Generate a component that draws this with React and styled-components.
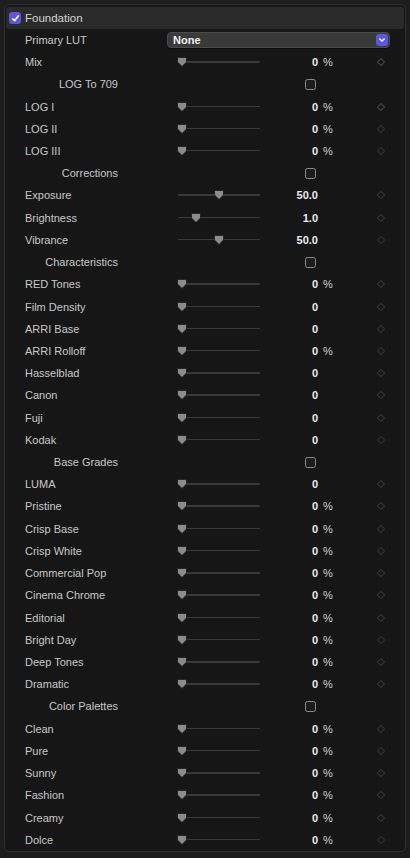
import React from "react";
import styled, { createGlobalStyle } from "styled-components";

const GlobalStyle = createGlobalStyle`
  html, body { margin: 0; padding: 0; background: #1d1d1d; }
  body { font-family: "Liberation Sans", Arial, sans-serif; -webkit-font-smoothing: antialiased; }
  * { box-sizing: border-box; }
`;

const Panel = styled.div`
  margin: 4px 4px 0 4px;
  width: 402px;
  border: 1px solid #2f2f2f;
  border-radius: 5px;
  background: #161616;
  padding: 2px 1px 0 1px;
`;

const Header = styled.div`
  height: 22px;
  background: #2a2a2a;
  border-radius: 3px;
  display: flex;
  align-items: center;
  padding-left: 3px;
  gap: 4px;
`;

const HeaderTitle = styled.span`
  color: #d4d4d4;
  font-size: 11.5px;
`;

const BlueCheck = styled.span`
  width: 12px;
  height: 12px;
  border-radius: 3px;
  background: #5a57d8;
  display: flex;
  align-items: center;
  justify-content: center;
`;

const Row = styled.div`
  height: ${(p) => p.$h || "22.23px"};
  display: grid;
  grid-template-columns: ${(p) => p.$cols};
  align-items: center;
  padding-left: 19px;
`;

const Label = styled.span`
  color: #c8c8c8;
  font-size: 11px;
  white-space: nowrap;
  text-align: ${(p) => (p.$right ? "right" : "left")};
`;

const Dropdown = styled.div`
  height: 16px;
  background: #3a3a3a;
  border: 1px solid #4b4b4b;
  border-radius: 4px;
  display: flex;
  align-items: center;
  justify-content: space-between;
  padding: 0 0 0 5px;
  box-shadow: 0 1px 1px rgba(0,0,0,0.5);
`;

const DropText = styled.span`
  color: #f0f0f0;
  font-size: 11px;
  font-weight: 700;
`;

const DropButton = styled.span`
  width: 12px;
  height: 12px;
  border-radius: 3px;
  background: #5a57e0;
  margin-right: 1px;
  display: flex;
  align-items: center;
  justify-content: center;
`;

const SliderBox = styled.div`
  position: relative;
  height: 10px;
  width: 84px;
`;

const Track = styled.div`
  position: absolute;
  left: 1px;
  right: 1px;
  top: 4px;
  height: 1.5px;
  background: #3a3a3a;
  border-radius: 1px;
`;

const Thumb = styled.svg`
  position: absolute;
  top: 0;
`;

const Value = styled.span`
  color: #ececec;
  font-size: 11px;
  font-weight: 700;
  text-align: right;
`;

const Unit = styled.span`
  color: #d0d0d0;
  font-size: 11px;
  padding-left: 5px;
`;

const Diamond = styled.span`
  justify-self: center;
  width: 6px;
  height: 6px;
  border: 1px solid ${(p) => (p.$lit ? "#474747" : "#333333")};
  transform: rotate(45deg);
`;

const Box = styled.span`
  width: 11px;
  height: 11px;
  border: 1.3px solid #8a8a8a;
  border-radius: 2.5px;
  background: #1c1c1c;
`;

const SLIDER_COLS = "152px 84px 57px 1fr 22px 12px";
const SUB_COLS = "93px 187px 12px";

const rows = [
  { t: "s", l: "Mix", v: "0", u: "%", lit: true },
  { t: "h", l: "LOG To 709" },
  { t: "s", l: "LOG I", v: "0", u: "%", lit: true },
  { t: "s", l: "LOG II", v: "0", u: "%" },
  { t: "s", l: "LOG III", v: "0", u: "%" },
  { t: "h", l: "Corrections" },
  { t: "s", l: "Exposure", v: "50.0", p: 0.49 },
  { t: "s", l: "Brightness", v: "1.0", p: 0.19 },
  { t: "s", l: "Vibrance", v: "50.0", p: 0.49 },
  { t: "h", l: "Characteristics" },
  { t: "s", l: "RED Tones", v: "0", u: "%" },
  { t: "s", l: "Film Density", v: "0" },
  { t: "s", l: "ARRI Base", v: "0" },
  { t: "s", l: "ARRI Rolloff", v: "0", u: "%" },
  { t: "s", l: "Hasselblad", v: "0" },
  { t: "s", l: "Canon", v: "0" },
  { t: "s", l: "Fuji", v: "0" },
  { t: "s", l: "Kodak", v: "0" },
  { t: "h", l: "Base Grades" },
  { t: "s", l: "LUMA", v: "0" },
  { t: "s", l: "Pristine", v: "0", u: "%" },
  { t: "s", l: "Crisp Base", v: "0", u: "%" },
  { t: "s", l: "Crisp White", v: "0", u: "%" },
  { t: "s", l: "Commercial Pop", v: "0", u: "%" },
  { t: "s", l: "Cinema Chrome", v: "0", u: "%" },
  { t: "s", l: "Editorial", v: "0", u: "%" },
  { t: "s", l: "Bright Day", v: "0", u: "%" },
  { t: "s", l: "Deep Tones", v: "0", u: "%" },
  { t: "s", l: "Dramatic", v: "0", u: "%" },
  { t: "h", l: "Color Palettes" },
  { t: "s", l: "Clean", v: "0", u: "%" },
  { t: "s", l: "Pure", v: "0", u: "%" },
  { t: "s", l: "Sunny", v: "0", u: "%" },
  { t: "s", l: "Fashion", v: "0", u: "%" },
  { t: "s", l: "Creamy", v: "0", u: "%" },
  { t: "s", l: "Dolce", v: "0", u: "%" },
];

function Slider({ p = 0 }) {
  return (
    <SliderBox>
      <Track />
      <Thumb width="10" height="10" viewBox="0 0 10 10" style={{ left: `${p * 75}px` }}>
        <polygon points="0.5,0.5 9.5,0.5 9.5,5 5,9.5 0.5,5" fill="#8b8b8b" stroke="#1a1a1a" strokeWidth="0.8" />
      </Thumb>
    </SliderBox>
  );
}

export default function App() {
  return (
    <>
      <GlobalStyle />
      <Panel>
        <Header>
          <BlueCheck>
            <svg width="9" height="9" viewBox="0 0 9 9">
              <path d="M1.6 4.8 L3.6 6.8 L7.4 1.8" fill="none" stroke="#fff" strokeWidth="1.5" strokeLinecap="round" strokeLinejoin="round" />
            </svg>
          </BlueCheck>
          <HeaderTitle>Foundation</HeaderTitle>
        </Header>
        <Row $h="22px" $cols="142px 223px">
          <Label>Primary LUT</Label>
          <Dropdown>
            <DropText>None</DropText>
            <DropButton>
              <svg width="8" height="8" viewBox="0 0 8 8">
                <path d="M1.8 2.9 L4 5.1 L6.2 2.9" fill="none" stroke="#fff" strokeWidth="1.4" strokeLinecap="round" strokeLinejoin="round" />
              </svg>
            </DropButton>
          </Dropdown>
        </Row>
        {rows.map((r, i) =>
          r.t === "h" ? (
            <Row key={i} $cols={SUB_COLS}>
              <Label $right>{r.l}</Label>
              <span />
              <Box />
            </Row>
          ) : (
            <Row key={i} $cols={SLIDER_COLS}>
              <Label>{r.l}</Label>
              <Slider p={r.p} />
              <Value>{r.v}</Value>
              <Unit>{r.u || ""}</Unit>
              <Diamond $lit={r.lit} />
              <span />
            </Row>
          )
        )}
      </Panel>
    </>
  );
}
